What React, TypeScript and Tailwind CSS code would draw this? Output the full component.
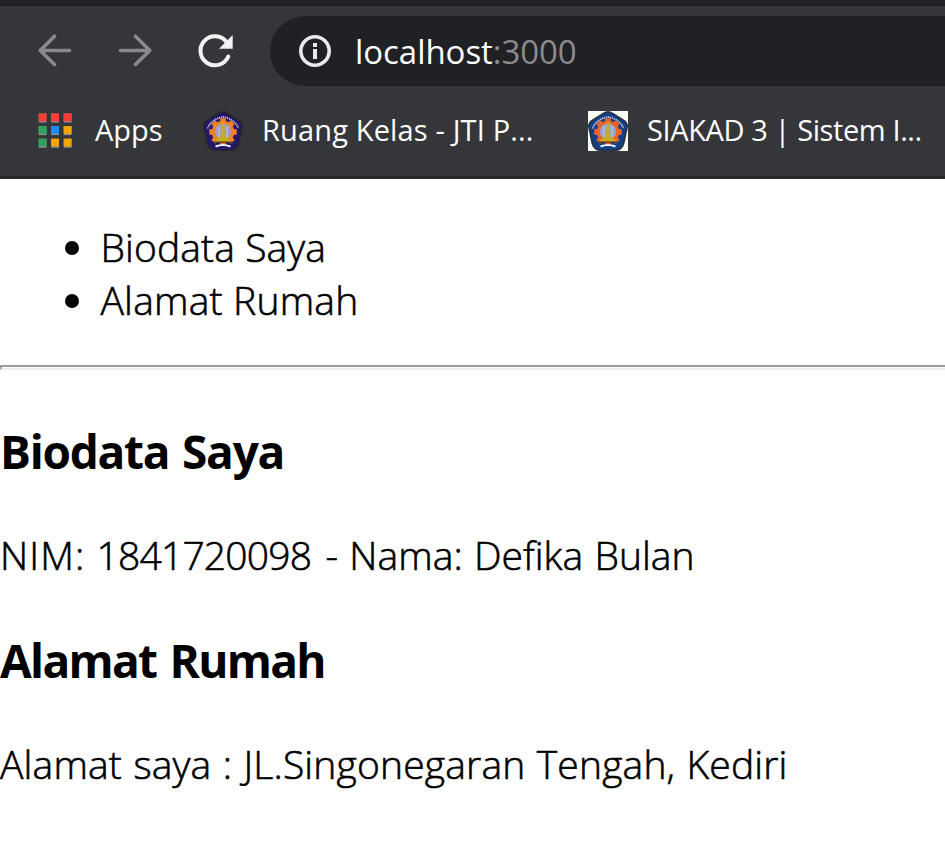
import React from "react";

const gearTeeth = [0, 45, 90, 135, 180, 225, 270, 315];

function Crest({ boxed = false }: { boxed?: boolean }) {
  const blue = boxed ? "#123f86" : "#25166b";
  const edge = boxed ? "#243448" : "#262430";
  const gear = boxed ? "#ef6426" : "#ee8126";
  return (
    <svg viewBox="0 0 40 40" className="size-10 shrink-0">
      {boxed && <rect width="40" height="40" fill="#fbfbf8" />}
      <path
        d="M20 .9Q22 .9 25 2.800L36.500 10Q39.700 12.300 39 16L35.800 31.500Q34.300 38.500 28 39.200H12Q5.700 38.500 4.200 31.500L1 16Q.3 12.300 3.500 10L15 2.800Q18 .9 20 .9Z"
        fill={blue}
        stroke={edge}
        strokeWidth="1.800"
      />
      <path d="M4.500 17.500Q7 11 14 7.800Q20 4.500 26 7.800Q33 11 35.500 17.500" fill="none" stroke="#c9c6dc" strokeWidth="1.700" strokeDasharray="1.300 .7" />
      <g fill={gear}>
        {gearTeeth.map((a) => (
          <rect key={a} x="17.200" y="7.300" width="5.600" height="6" transform={`rotate(${a} 20 21)`} />
        ))}
        <circle cx="20" cy="21" r="11.300" />
      </g>
      <circle cx="20" cy="20.500" r="8" fill={boxed ? "#8fa9d6" : "#a19bc8"} />
      <path d="M16 15.500V26M24 15.500V26" stroke="#b9bbd9" strokeWidth="1.500" />
      <path d="M20 9.500L21.300 13L22.300 26H17.700L18.700 13Z" fill="#c9ad25" />
      <path d="M16 26H24L29 30.200H11Z" fill="#c5ad20" />
      <path d="M11 31.200H29" stroke="#4a3b20" strokeWidth="1.300" />
      <path d="M12.500 35.500Q20 32.500 27.500 35.500" fill="none" stroke="#eeeef2" strokeWidth="2.200" />
    </svg>
  );
}

const appColors = [
  "#fb3b36", "#fb3b36", "#fb3b36",
  "#2fa35b", "#1d8bf5", "#f6a500",
  "#2fa35b", "#f6a500", "#f6a500",
];

export default function App() {
  return (
    <div className="h-[855px] w-[945px] overflow-hidden bg-white font-['Open_Sans',sans-serif] whitespace-nowrap text-black">
      <header className="h-[179px] border-t-[6px] border-b-[3px] border-t-[#202124] border-b-[#282828] bg-[#35363a] text-white">
        <div className="flex h-[90px] items-center">
          <svg viewBox="0 0 270 90" className="h-[90px] w-[270px] shrink-0" fill="none">
            <path d="M69.500 44.500H40.500M54.500 30.200L40.200 44.500L54.500 58.500" stroke="#88898c" strokeWidth="3.600" strokeLinecap="round" strokeLinejoin="round" />
            <path d="M120.500 44.500H149.500M135.500 30.200L149.800 44.500L135.500 58.500" stroke="#88898c" strokeWidth="3.600" strokeLinecap="round" strokeLinejoin="round" />
            <path d="M226.500 36A14.500 14.500 0 1 0 228.300 50.500" stroke="#f1f3f4" strokeWidth="4" strokeLinecap="round" />
            <path d="M232.700 29V42.700H219Z" fill="#f1f3f4" />
          </svg>
          <div className="flex h-[70px] flex-1 items-center rounded-l-full bg-[#202124] pl-[29px]">
            <svg viewBox="0 0 32 32" className="size-8 shrink-0">
              <circle cx="16" cy="16" r="14.200" fill="none" stroke="#e8eaed" strokeWidth="3.600" />
              <path d="M14 8h4v4h-4zM14 14h4v10h-4z" fill="#e8eaed" />
            </svg>
            <span className="mt-[2px] ml-[24px] text-[33px] leading-[50px] tracking-[-0.05px]"><span>localhost</span><span className="text-[#8a8b8d]">:3000</span></span>
          </div>
        </div>
        <nav className="flex h-[70px] items-center pl-[38px] text-[29px] leading-[40px]">
          <svg viewBox="0 0 34 36" className="h-9 w-[34px] shrink-0">
            {appColors.map((c, i) => (
              <g key={i} transform={`translate(${0.7 + (i % 3) * 12.5} ${0.500 + Math.floor(i / 3) * 12.6})`}>
                <rect width="7.800" height="9" fill="#8f9094" />
                <rect width="7.800" height="7.700" fill={c} />
              </g>
            ))}
          </svg>
          <span className="-mt-[2px] ml-[23px] w-[108px]">Apps</span>
          <Crest />
          <span className="-mt-[2px] ml-[19px] w-[326px] tracking-[0.15px]">Ruang Kelas - JTI P...</span>
          <Crest boxed />
          <span className="-mt-[2px] ml-[19px] tracking-[-0.4px]">SIAKAD 3 | Sistem I...</span>
        </nav>
      </header>
      <main className="pt-[41px] text-[39px] leading-[53px] font-light">
        <ul className="[-webkit-text-stroke:0.6px_black]">
          <li className="flex items-center pl-[65px]"><i className="mt-[2px] mr-[21.500px] size-[14px] rounded-full bg-black" /><span className="tracking-[0.1px]">Biodata Saya</span></li>
          <li className="flex items-center pl-[65px]"><i className="mt-[2px] mr-[21.500px] size-[14px] rounded-full bg-black" /><span className="tracking-[0.2px]">Alamat Rumah</span></li>
        </ul>
        <div className="mt-[39px] h-[5px] border-t-2 border-b-2 border-l-2 border-t-[#9a9a9a] border-b-[#eeeeee] border-l-[#9a9a9a]" />
        <h3 className="mt-[50px] text-[46px] leading-[63px] font-bold tracking-[-1.25px] [word-spacing:2px]"><span>Biodata Saya</span></h3>
        <p className="mt-[45px] [-webkit-text-stroke:0.6px_black]">
          <span className="tracking-[1.1px]">NIM: </span>
          <span className="tracking-[-0.8px] [word-spacing:5px]">1841720098 </span>
          <span className="tracking-[0.05px] [word-spacing:1px]">- Nama: Defika Bulan</span>
        </p>
        <h3 className="mt-[48px] text-[46px] leading-[63px] font-bold tracking-[-1.7px] [word-spacing:3px]"><span>Alamat Rumah</span></h3>
        <p className="mt-[45px] tracking-[0.17px] [word-spacing:1px] [-webkit-text-stroke:0.6px_black]"><span>Alamat saya : JL.Singonegaran Tengah, Kediri</span></p>
      </main>
    </div>
  );
}
